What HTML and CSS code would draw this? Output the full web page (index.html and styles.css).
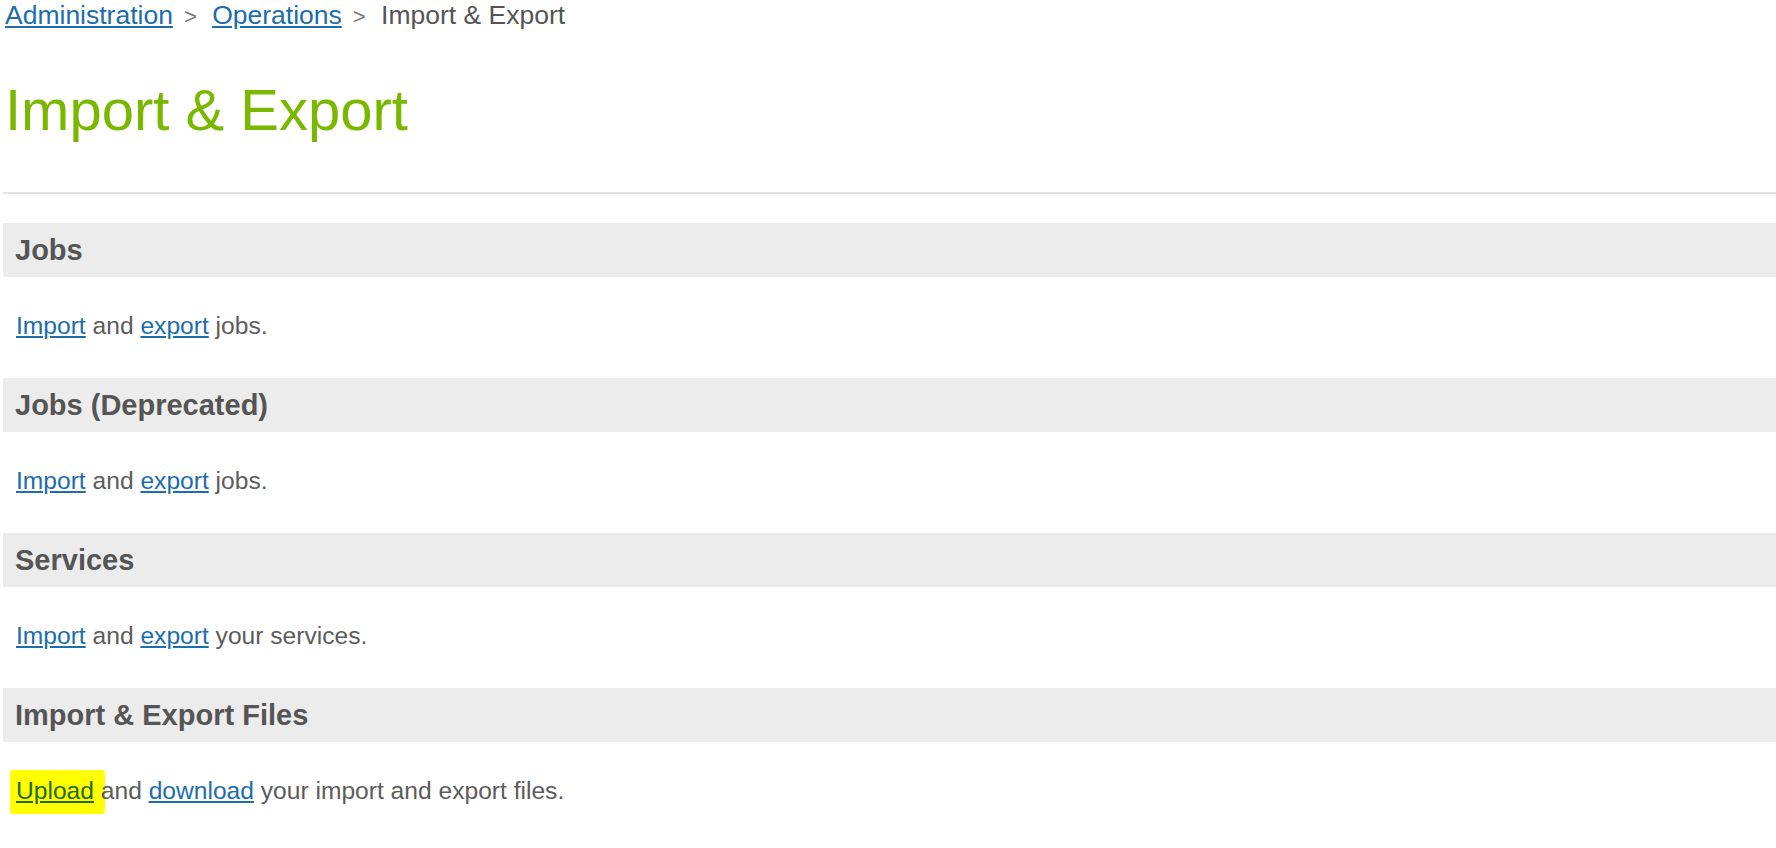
FILE: index.html
```
<!DOCTYPE html>
<html lang="en">

<head>
  <meta charset="UTF-8">
  <title>Import &amp; Export</title>
  <link rel="stylesheet" href="styles.css">
</head>

<body>
  <div class="page">
    <div class="crumbs">
      <a href="#">Administration</a><span class="sep">&gt;</span>
      <a href="#">Operations</a><span class="sep">&gt;</span>
      <span class="here">Import &amp; Export</span>
    </div>

    <h1>Import &amp; Export</h1>
    <div class="rule"></div>

    <div class="section">
      <h2>Jobs</h2>
      <p><a href="#">Import</a> and <a href="#">export</a> jobs.</p>
    </div>

    <div class="section">
      <h2>Jobs (Deprecated)</h2>
      <p><a href="#">Import</a> and <a href="#">export</a> jobs.</p>
    </div>

    <div class="section">
      <h2>Services</h2>
      <p><a href="#">Import</a> and <a href="#">export</a> your services.</p>
    </div>

    <div class="section">
      <h2>Import &amp; Export Files</h2>
      <p><span class="hl"><a href="#">Upload</a></span> and <a href="#">download</a> your import and export files.</p>
    </div>
  </div>
</body>

</html>
```

FILE: styles.css
```
body {
  margin: 0;
  font-family: "Liberation Sans", Arial, Helvetica, sans-serif;
  color: #555;
  background: #fff;
}

a {
  color: #1c6dad;
  text-decoration: underline;
}

.page {
  padding-left: 3px;
}

.crumbs {
  font-size: 26.5px;
  line-height: 30px;
  padding-left: 2px;
}

.sep {
  color: #777;
  font-size: 22px;
  margin: 0 8px 0 11px;
}

.here {
  color: #555;
}

h1 {
  font-size: 58px;
  line-height: 66px;
  font-weight: normal;
  color: #7ab800;
  margin: 45px 0 0 2px;
}

.rule {
  height: 2px;
  background: #e3e3e3;
  margin-top: 49px;
}

.section {
  margin-top: 29px;
}

.section+.section {
  margin-top: 0;
}

h2 {
  margin: 0;
  background: #ececec;
  height: 54px;
  line-height: 54px;
  font-size: 29px;
  font-weight: bold;
  padding-left: 12px;
}

p {
  margin: 0;
  font-size: 24.6px;
  line-height: 28px;
  padding: 35px 0 38px 13px;
  color: #5c5c5c;
}

.hl {
  background: #ffff00;
  padding: 7px 11px 10px 6px;
  margin: 0 -11px 0 -6px;
  border-radius: 3px;
}

.hl a {
  color: #1d6b0c;
}
```
